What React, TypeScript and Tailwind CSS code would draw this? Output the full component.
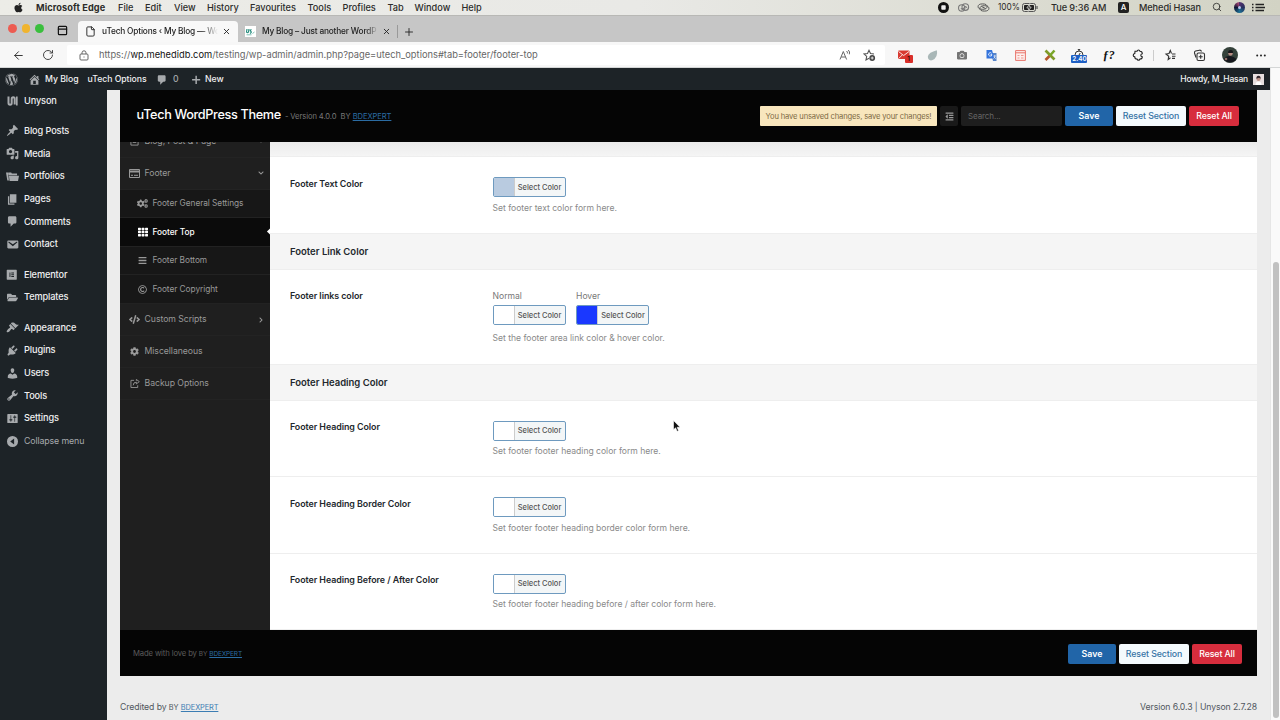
import { ReactNode } from "react";
import {
  FaApple,
  FaCamera,
  FaChevronDown,
  FaChevronRight,
  FaCode,
  FaCog,
  FaCogs,
  FaBars,
  FaElementor,
  FaFolderOpen,
  FaOutdent,
  FaRegCopyright,
  FaTh,
  FaWordpress,
} from "react-icons/fa";
import {
  ArrowLeft,
  File as FileIcon,
  PanelTop,
  Plus,
  RotateCw,
  Search,
  X,
} from "lucide-react";

interface iconProps {
  d: string;
  className?: string;
}

const dash = {
  post: "M10.44 3.02l1.82-1.82 6.36 6.35-1.83 1.82c-1.05-.68-2.48-.57-3.41.36l-.75.75c-.92.93-1.04 2.35-.35 3.41l-1.83 1.82-2.41-2.41-2.8 2.79c-.42.42-3.38 2.71-3.8 2.29s1.86-3.39 2.28-3.81l2.79-2.79L4.1 9.36l1.83-1.82c1.05.69 2.48.57 3.4-.36l.75-.75c.93-.92 1.05-2.35.36-3.41z",
  media:
    "M13 11V4c0-.55-.45-1-1-1h-1.67L9 1H5L3.67 3H2c-.55 0-1 .45-1 1v7c0 .55.45 1 1 1h10c.55 0 1-.45 1-1zM7 4.5c1.38 0 2.5 1.12 2.5 2.5S8.38 9.5 7 9.5 4.5 8.38 4.5 7 5.62 4.5 7 4.5zM14 6h5v10.5c0 1.38-1.12 2.5-2.5 2.5S14 17.88 14 16.5s1.12-2.5 2.5-2.5c.17 0 .34.02.5.05V9h-3V6zm-4 8.05V13h2v3.5c0 1.38-1.12 2.5-2.5 2.5S7 17.88 7 16.5 8.12 14 9.5 14c.17 0 .34.02.5.05z",
  portfolio:
    "M0 4h3.5l1 1.5L3.600 7 4.500 16H2zM4 7V4h4l1 1.500h8V8H4.800zM4.500 9H20l-1.500 8H5.500z",
  page: "M6 15V2h10v13H6zm-1 1h8v2H3V5h2v11z",
  comment:
    "M5 2h9c1.1 0 2 .9 2 2v7c0 1.1-.9 2-2 2h-2l-5 5v-5H5c-1.1 0-2-.9-2-2V4c0-1.1.9-2 2-2z",
  email:
    "M3.87 4h13.25C18.37 4 19 4.59 19 5.79v8.42c0 1.19-.63 1.79-1.88 1.79H3.87c-1.25 0-1.88-.6-1.88-1.79V5.79c0-1.2.63-1.79 1.88-1.79zm6.62 8.6l6.74-5.53c.24-.2.43-.66.13-1.07-.29-.41-.82-.42-1.17-.17l-5.7 3.86L4.8 5.83c-.35-.25-.88-.24-1.17.17-.3.41-.11.87.13 1.07z",
  appearance:
    "M14.48 11.06L7.41 3.99l1.5-1.5c.5-.56 2.3-.47 3.51.32 1.21.8 1.43 1.28 2.91 2.1 1.18.64 2.45 1.26 4.45.85zm-.71.71L6.7 4.7 4.93 6.47c-.39.39-.39 1.02 0 1.41l1.06 1.06c.39.39.39 1.03 0 1.42-.6.6-1.43 1.11-2.21 1.69-.35.26-.7.53-1.01.84C1.43 14.23.4 16.08 1.4 17.07c.99 1 2.84-.03 4.18-1.36.31-.31.58-.66.85-1.02.57-.78 1.08-1.61 1.69-2.21.39-.39 1.02-.39 1.41 0l1.06 1.06c.39.39 1.02.39 1.41 0z",
  plugins:
    "M13.11 4.36L9.87 7.6 8 5.73l3.24-3.24c.35-.34 1.05-.2 1.56.32.52.51.66 1.21.31 1.55zm-8 1.77l.91-1.12 9.01 9.01-1.19.84c-.71.71-2.63 1.16-3.82 1.16H6.14L4.9 17.26c-.59.59-1.54.59-2.12 0-.59-.58-.59-1.53 0-2.12l1.24-1.24v-3.88c0-1.13.4-3.19 1.09-3.89zm7.26 3.97l3.24-3.24c.34-.35 1.04-.21 1.55.31.52.51.66 1.21.31 1.55l-3.24 3.25z",
  users:
    "M10 9.25c-2.27 0-2.73-3.44-2.73-3.44C7 4.02 7.82 2 9.97 2c2.16 0 2.98 2.02 2.71 3.81 0 0-.41 3.44-2.68 3.44zm0 2.57L12.72 10c2.39 0 4.52 2.33 4.52 4.53v2.49s-3.65 1.13-7.24 1.13c-3.65 0-7.24-1.13-7.24-1.13v-2.49c0-2.25 1.94-4.48 4.47-4.48z",
  tools:
    "M16.68 9.77c-1.34 1.34-3.3 1.67-4.95.99l-5.41 6.52c-.99.99-2.59.99-3.58 0s-.99-2.59 0-3.57l6.52-5.42c-.68-1.65-.35-3.61.99-4.95 1.28-1.28 3.12-1.62 4.72-1.06l-2.89 2.89 2.82 2.82 2.86-2.87c.53 1.58.18 3.39-1.08 4.65zM3.81 16.21c.4.39 1.04.39 1.43 0 .4-.4.4-1.04 0-1.43-.39-.4-1.03-.4-1.43 0-.39.39-.39 1.03 0 1.43z",
  settings:
    "M18 16V4c0-.55-.45-1-1-1H3c-.55 0-1 .45-1 1v12c0 .55.45 1 1 1h14c.55 0 1-.45 1-1zM8 11h1c.55 0 1 .45 1 1s-.45 1-1 1H8v1.5c0 .28-.22.5-.5.5s-.5-.22-.5-.5V13H6c-.55 0-1-.45-1-1s.45-1 1-1h1V5.5c0-.28.22-.5.5-.5s.5.22.5.5V11zm5-2h-1c-.55 0-1-.45-1-1s.45-1 1-1h1V5.5c0-.28.22-.5.5-.5s.5.22.5.5V7h1c.55 0 1 .45 1 1s-.45 1-1 1h-1v5.5c0 .28-.22.5-.5.5s-.5-.22-.5-.5V9z",
  home: "M16 8.5l1.53 1.53-1.06 1.06L10 4.6l-6.47 6.49-1.06-1.06L10 2.5l4 4v-2h2v4zm-6-2.46l6 5.99V18H4v-5.97zM12 17v-5H8v5h4z",
  plus: "M17 8.500v2.500h-5.500v5.500H9v-5.500H3.500V8.500H9V3h2.500v5.500z",
  collapse:
    "M10 1.500a8.500 8.500 0 1 0 0 17 8.500 8.500 0 0 0 0-17zM12.500 5.500v9L6.500 10z",
};

const DashIcon = ({ d, className = "size-[13px]" }: iconProps) => (
  <svg viewBox="0 0 20 20" fill="currentColor" fillRule="evenodd" className={className}>
    <path d={d} />
  </svg>
);

const UnysonIcon = () => (
  <svg viewBox="0 0 11 10" className="h-[10px] w-[11px]" fill="none" stroke="currentColor" strokeWidth="2">
    <path d="M1.500 .5v6.500q0 1.800 1.600 1.800T4.700 7V3q0-1.800 1.500-1.800T7.700 3v5.500" />
    <path d="M9.800 .5v9" strokeWidth="1.700" />
  </svg>
);

const menus: [string, string][] = [
  ["File", "w-[27px]"],
  ["Edit", "w-[29px]"],
  ["View", "w-[33px]"],
  ["History", "w-[43px]"],
  ["Favourites", "w-[57.500px]"],
  ["Tools", "w-[35px]"],
  ["Profiles", "w-[45px]"],
  ["Tab", "w-[27px]"],
  ["Window", "w-[47px]"],
  ["Help", "w-[30px]"],
];

const MenuBar = () => (
  <div className="flex h-[15px] items-center bg-gradient-to-r from-[#ecece7] via-[#e9e9e6] to-[#d2d3c4] text-[9.200px] font-medium text-[#2c2c2a]">
    <FaApple className="ml-[13px] size-[11px] text-[#222]" />
    <span className="ml-[12px] w-[82px] font-bold tracking-[0.1px]">Microsoft Edge</span>
    {menus.map(([label, width]) => (
      <span key={label} className={`shrink-0 whitespace-nowrap ${width}`}>
        {label}
      </span>
    ))}
    <div className="ml-auto flex items-center whitespace-nowrap">
      <svg viewBox="0 0 11 11" className="mr-[8px] size-[11px]">
        <circle cx="5.500" cy="5.500" r="5.500" fill="#111" />
        <rect x="3.300" y="3.300" width="4.400" height="4.400" rx=".8" fill="#eee" />
      </svg>
      <svg viewBox="0 0 14 10" className="mr-[7px] h-[9px] w-[13px]" fill="none" stroke="#777" strokeWidth="1.200">
        <circle cx="5" cy="5.500" r="3.500" />
        <circle cx="9" cy="4.500" r="3.700" />
        <path d="M4 6l2 1 3-3 2 1" />
      </svg>
      <svg viewBox="0 0 14 10" className="mr-[8px] h-[9px] w-[13px]" fill="none" stroke="#555" strokeWidth="1.100">
        <ellipse cx="6" cy="4" rx="5" ry="3" />
        <ellipse cx="8" cy="6" rx="5" ry="3" />
        <path d="M5 4l4 2" />
      </svg>
      <span className="w-[24px] text-[8.300px] font-normal">100%</span>
      <svg viewBox="0 0 16 9" className="mr-[13px] h-[9px] w-[16px]">
        <rect x=".5" y=".5" width="13" height="8" rx="2" fill="none" stroke="#555" />
        <rect x="2" y="2" width="10" height="5" rx=".8" fill="#222" />
        <path d="M15 3v3" stroke="#555" strokeWidth="1.200" />
        <path d="M7.800 .5L4.800 5h2l-.6 3.500L9.200 4h-2z" fill="#222" stroke="#e6e6e2" strokeWidth=".7" />
      </svg>
      <span className="w-[67px] tracking-[-0.08px]">Tue 9:36 AM</span>
      <span className="mr-[10px] flex size-[11px] items-center justify-center rounded-[2px] bg-[#222] text-[8px] text-white">
        A
      </span>
      <span className="w-[73px] tracking-[-0.08px]">Mehedi Hasan</span>
      <Search className="mr-[12px] size-[10px]" />
      <span className="mr-[7px] flex size-[11px] items-center justify-center rounded-full bg-[conic-gradient(#53306e,#27325e,#1b6e93,#111634,#b64c7c)]">
        <span className="size-[3px] rounded-full bg-[#b9c5ec]" />
      </span>
      <svg viewBox="0 0 13 9" className="mr-[15px] h-[9px] w-[13px]" stroke="#222" strokeWidth="1.500">
        <path d="M3.500 1.500H12M3.500 4.500H13M3.500 7.500H12M0 1.500h1.500M0 4.500h1.500M0 7.500h1.500" />
      </svg>
    </div>
  </div>
);

const TabStrip = () => (
  <div className="flex h-[27px] items-end border-t border-[#b8b8b5] bg-[#c6c6c6] text-[8.300px] font-medium tracking-[-0.18px] text-[#222]">
    <div className="flex h-[27px] w-[78px] items-center gap-[5px] pl-[8px]">
      <span className="size-[8.500px] rounded-full bg-[#ed5c52]" />
      <span className="size-[8.500px] rounded-full bg-[#f0b42f]" />
      <span className="size-[8.500px] rounded-full bg-[#3abf3d]" />
      <PanelTop className="mt-[4px] ml-[8px] size-[11px] text-[#111]" strokeWidth={2.6} />
    </div>
    <div className="flex h-[21px] w-[160px] items-center rounded-t-[4px] bg-[#f8f8f8] pl-[7px]">
      <FileIcon className="mr-[6px] size-[11px] shrink-0" />
      <span className="w-[116px] whitespace-nowrap [mask-image:linear-gradient(90deg,#000_86%,transparent)]">
        uTech Options ‹ My Blog — Wo
      </span>
      <X className="ml-[4px] size-[9px]" strokeWidth={2.4} />
    </div>
    <div className="flex h-[21px] items-center pl-[7px]">
      <svg viewBox="0 0 11 11" className="mr-[6px] size-[11px]" fill="none" strokeWidth="1.200">
        <path d="M0 0h11v11H0z" fill="#fff" />
        <path d="M2 3L1.500 6q1 1.500 2 0L4 3M6.500 3.500q-2 .5-.7 1.700T5 7.500" stroke="#248c7d" />
        <path d="M7.500 7.500L9.500 6M1.500 8.800h5" stroke="#61b3a5" strokeWidth=".8" />
      </svg>
      <span className="w-[116px] whitespace-nowrap [mask-image:linear-gradient(90deg,#000_90%,transparent)]">
        My Blog – Just another WordP
      </span>
      <X className="ml-[4px] size-[9px]" strokeWidth={2.4} />
      <span className="ml-[6px] h-[13px] w-px bg-[#999]" />
      <Plus className="ml-[5px] size-[12px]" strokeWidth={1.8} />
    </div>
  </div>
);

const Extension = ({ children }: { children: ReactNode }) => (
  <span className="flex w-[29.300px] shrink-0 items-center justify-center">{children}</span>
);

const Toolbar = () => (
  <div className="flex h-[26px] items-center border-b border-[#d4d6d6] bg-[#f7f7f7] pt-px text-[#333]">
    <ArrowLeft className="ml-[12px] size-[13px]" strokeWidth={1.8} />
    <RotateCw className="ml-[17px] size-[12px]" strokeWidth={1.8} />
    <div className="ml-[13px] flex h-[20px] w-[818px] items-center rounded-[2px] bg-white pl-[12px]">
      <svg viewBox="0 0 10 11" className="mr-[10px] h-[11px] w-[10px]" fill="none" stroke="#666">
        <rect x="1" y="4" width="8" height="6" rx="1" />
        <path d="M3 4V2.800a2 2 0 0 1 4 0V4M4.500 7h1" />
      </svg>
      <span className="text-[9.300px] tracking-[0.015px] text-[#666]">
        https://<span className="text-[#111]">wp.mehedidb.com</span>
        /testing/wp-admin/admin.php?page=utech_options#tab=footer/footer-top
      </span>
      <svg viewBox="0 0 12 12" className="mr-[12px] ml-auto size-[12px]" fill="none" stroke="#666" strokeWidth="1">
        <path d="M1 10.500L4.300 2.500 7.600 10.500M2.200 8h4.200M7.500 2q1.500 1 .8 2.500M9.300 1q2 1.800 1 4.300" />
      </svg>
      <svg viewBox="0 0 13 13" className="mr-[9px] size-[13px]" fill="none" stroke="#555" strokeWidth="1.100">
        <path d="M6 9.200L3 11l.7-3.600L1 5l3.500-.5L6 1.300l1.500 3.200L11 5" />
        <circle cx="9.200" cy="9" r="2.900" fill="#444" stroke="none" />
        <path d="M9.200 7.500v3M7.700 9h3" stroke="#fff" strokeWidth=".8" />
      </svg>
    </div>
    <div className="flex items-center pl-[4px]">
      <Extension>
        <span className="relative">
          <svg viewBox="0 0 12 10" className="h-[10px] w-[12px]">
            <rect y=".5" width="11.500" height="8.500" rx="1" fill="#d83931" />
            <path d="M.5 1.500l5.200 4 5.300-4M.7 8.500l3.500-3.500" fill="none" stroke="#fbe3e1" />
          </svg>
          <span className="absolute top-[5px] left-[7px] flex h-[8px] w-[8px] items-center justify-center rounded-[1px] bg-[#d92f2a] text-[6.500px] leading-none text-black">
            1
          </span>
        </span>
      </Extension>
      <Extension>
        <svg viewBox="0 0 11 11" className="size-[11px]">
          <path d="M9.800 .3Q11 6 7.500 9 3.500 11.800 1.400 9-.4 5.500 3.500 2.800 6 1.600 9.800 .3z" fill="#a9b7b7" />
        </svg>
      </Extension>
      <Extension>
        <FaCamera className="size-[10px] text-[#757575]" />
      </Extension>
      <Extension>
        <svg viewBox="0 0 11 11" className="size-[11px]">
          <path d="M5 3h5.500v8H7z" fill="#5885c9" />
          <path d="M.5 0H6l2.500 8.500H.5z" fill="#3474dc" />
          <path d="M5.600 3.300A1.700 1.700 0 1 0 6 4.600H4.500" fill="none" stroke="#fff" strokeWidth=".8" />
          <path d="M7.500 6h2.500M8.700 5.300v1Q8.500 8 7.500 8.500M8 6.800l1.700 2" fill="none" stroke="#fff" strokeWidth=".6" />
        </svg>
      </Extension>
      <Extension>
        <svg viewBox="0 0 11 11" className="size-[11px]" fill="none" stroke="#e8766c">
          <path d="M.6 .6h9.800v9.800H.6zM.6 2.800h9.800" fill="#fdeeec" />
          <path d="M2.500 5.500h2M6 5.500h2.500M2.500 8h2M6 8h2.500" strokeWidth=".7" />
        </svg>
      </Extension>
      <Extension>
        <svg viewBox="0 0 12 12" className="size-[12px]" strokeWidth="2.600">
          <path d="M1.500 1.500l9 9" stroke="#7f9b29" />
          <path d="M10.500 1.500l-5 5.500" stroke="#79a629" />
          <path d="M5.500 7l-4 4" stroke="#b5582b" />
        </svg>
      </Extension>
      <Extension>
        <span className="mt-[2px] flex h-[14px] w-[16px] flex-col items-center">
          <svg viewBox="0 0 10 6" className="h-[6px] w-[10px] shrink-0" fill="none" stroke="#333">
            <path d="M1 6A4 4 0 0 1 9 6M3.800 .6h2.400M5 .6v1.500M5 6l1.200-2" />
          </svg>
          <span className="flex h-[8px] w-[16px] shrink-0 items-center justify-center rounded-[1px] bg-[#1e5fc4] text-[6.300px] leading-none font-semibold text-white">
            2.40
          </span>
        </span>
      </Extension>
      <Extension>
        <span className="font-[Liberation_Serif] text-[12px] leading-none font-bold text-[#111] italic">ƒ?</span>
      </Extension>
      <Extension>
        <svg viewBox="0 0 12 12" className="size-[12px]" fill="none" stroke="#222" strokeWidth="1.100">
          <path d="M3 2.300h2q.3-1.300 1.500-1.300T8 2.300q2.300 0 2.300 2.400-1.500.2-1.500 1.500t1.500 1.500Q10.300 10 8 10q-.3 1.200-1.500 1.200T5 10Q2.800 10 2.800 7.900 1.200 7.600 1.200 6.200T2.800 4.500z" />
        </svg>
      </Extension>
      <span className="h-[11px] w-px bg-[#ccc]" />
      <Extension>
        <svg viewBox="0 0 12 12" className="ml-[4px] size-[12px]" fill="none" stroke="#333" strokeWidth="1.100">
          <path d="M6.500 8.800L4.200 10.500l.5-3.300L2 5l3-.5L6.300 1.500 7.500 4.500M8 5h3.500M8 7.200h3.500M8 9.400h3" />
        </svg>
      </Extension>
      <Extension>
        <svg viewBox="0 0 13 13" className="ml-[4px] size-[13px]" fill="none" stroke="#333" strokeWidth="1.100">
          <rect x="4" y="4" width="7.500" height="7.500" rx="1.500" />
          <path d="M7.700 5.800v4M5.700 7.800h4M3 8.500L1.500 4q-.3-1.500 1-2L6.500 1.200Q8 1 8.500 2.500" />
        </svg>
      </Extension>
      <Extension>
        <svg viewBox="0 0 16 16" className="ml-[6px] size-[16px]">
          <circle cx="8" cy="8" r="8" fill="#34413a" />
          <path d="M1.500 12Q4 8.500 8 9t6.500 3A8 8 0 0 1 1.500 12z" fill="#15171d" />
          <circle cx="8.500" cy="6.500" r="2.200" fill="#b88d84" />
          <path d="M6 6q0-3 2.700-3T11 6z" fill="#17161a" />
          <circle cx="4" cy="12" r="1.300" fill="#927069" />
        </svg>
      </Extension>
      <svg viewBox="0 0 10 3" className="ml-[14px] h-[3px] w-[10px]" fill="#222">
        <circle cx="1.200" cy="1.500" r="1" />
        <circle cx="5" cy="1.500" r="1" />
        <circle cx="8.800" cy="1.500" r="1" />
      </svg>
    </div>
  </div>
);

const AdminBar = () => (
  <div className="flex h-[22px] items-center bg-[#1d2327] pt-px text-[8.700px] font-medium tracking-[-0.05px] text-[#f0f0f1]">
    <FaWordpress className="-mt-px ml-[5px] size-[13px] text-[#a7aaad]" />
    <DashIcon d={dash.home} className="-mt-px ml-[10px] size-[13px] text-[#a7aaad]" />
    <span className="ml-[4px] w-[42.500px] whitespace-nowrap">My Blog</span>
    <span className="w-[68.500px] whitespace-nowrap">uTech Options</span>
    <DashIcon d={dash.comment} className="size-[12px] text-[#a7aaad]" />
    <span className="ml-[5px] w-[17px] text-[#a7aaad]">0</span>
    <DashIcon d={dash.plus} className="size-[12px] text-[#a7aaad]" />
    <span className="ml-[3px]">New</span>
    <span className="ml-auto text-[8.500px] tracking-[-0.2px]">Howdy, M_Hasan</span>
    <svg viewBox="0 0 11 11" className="mr-[6px] ml-[5px] size-[11px]">
      <path d="M0 0h11v11H0z" fill="#e7dfdf" />
      <path d="M2.500 11q0-3.500 3-3.500t3 3.500z" fill="#fff" />
      <circle cx="5.500" cy="5" r="2.100" fill="#bd9388" />
      <path d="M3.300 4.700q0-3 2.200-3t2.200 3L6 3.700z" fill="#30242a" />
    </svg>
  </div>
);

interface menuItem {
  label: string;
  icon: ReactNode;
  gap?: boolean;
  dim?: boolean;
}

const adminMenu: menuItem[] = [
  { label: "Unyson", icon: <UnysonIcon /> },
  { label: "Blog Posts", icon: <DashIcon d={dash.post} />, gap: true },
  { label: "Media", icon: <DashIcon d={dash.media} /> },
  { label: "Portfolios", icon: <DashIcon d={dash.portfolio} /> },
  { label: "Pages", icon: <DashIcon d={dash.page} /> },
  { label: "Comments", icon: <DashIcon d={dash.comment} /> },
  { label: "Contact", icon: <DashIcon d={dash.email} /> },
  { label: "Elementor", icon: <FaElementor className="size-[11.500px]" />, gap: true },
  { label: "Templates", icon: <FaFolderOpen className="size-[11px]" /> },
  { label: "Appearance", icon: <DashIcon d={dash.appearance} />, gap: true },
  { label: "Plugins", icon: <DashIcon d={dash.plugins} /> },
  { label: "Users", icon: <DashIcon d={dash.users} /> },
  { label: "Tools", icon: <DashIcon d={dash.tools} /> },
  { label: "Settings", icon: <DashIcon d={dash.settings} /> },
  { label: "Collapse menu", icon: <DashIcon d={dash.collapse} />, dim: true },
];

const AdminMenu = () => (
  <div className="-mt-[0.700px] w-[107px] shrink-0 bg-[#1d2327] text-[9.200px] font-medium tracking-[-0.12px] text-[#f0f0f1]">
    {adminMenu.map(({ label, icon, gap, dim }) => (
      <div key={label} className={`flex h-[22.700px] items-center ${gap ? "mt-[7.600px]" : ""}`}>
        <span className="mr-[5px] ml-[5px] flex w-[14px] justify-center text-[#a7aaad]">{icon}</span>
        <span className={dim ? "text-[8.800px] font-normal text-[#a7aaad]" : ""}>{label}</span>
      </div>
    ))}
  </div>
);

const Actions = () => (
  <div className="flex gap-[3px] text-[8.800px] font-medium">
    <span className="flex h-5 w-12 items-center justify-center rounded-[2px] bg-[#2165a8] font-semibold text-white">
      Save
    </span>
    <span className="flex h-5 w-[70px] items-center justify-center rounded-[2px] bg-[#f4fafd] tracking-[-0.1px] whitespace-nowrap text-[#3573a5]">
      Reset Section
    </span>
    <span className="flex h-5 w-[50px] items-center justify-center rounded-[2px] bg-[#d72d3d] tracking-[-0.12px] whitespace-nowrap text-white">
      Reset All
    </span>
  </div>
);

const ThemeHeader = () => (
  <div className="flex h-[52px] shrink-0 items-center bg-[#050505] pr-[18px] pl-[16.500px]">
    <span className="-mt-[2px] text-[12.700px] font-medium tracking-[-0.350px] text-white">uTech WordPress Theme</span>
    <span className="mt-[2px] ml-[4px] text-[7.600px] tracking-[-0.08px] text-[#777]">
      - Version 4.0.0 &nbsp;BY{" "}
      <span className="text-[#2b6ca3] underline">BDEXPERT</span>
    </span>
    <div className="ml-auto flex items-center gap-[3px]">
      <span className="flex h-5 w-[177px] items-center justify-center rounded-[1px] bg-[#f8e6bd] pt-px text-[7.600px] tracking-[-0.150px] whitespace-nowrap text-[#7d6a45]">
        You have unsaved changes, save your changes!
      </span>
      <span className="flex h-5 w-[18px] items-center justify-center rounded-[2px] bg-[#191919] text-[#999]">
        <FaOutdent className="size-[9px]" />
      </span>
      <span className="flex h-5 w-[101px] items-center rounded-[2px] bg-[#1e1e1e] pl-[7px] text-[8px] tracking-[-0.1px] text-[#666]">
        Search...
      </span>
      <Actions />
    </div>
  </div>
);

interface navItem {
  label: string;
  icon: ReactNode;
  arrow?: ReactNode;
}

const NavRow = ({ label, icon, arrow }: navItem) => (
  <div className="flex h-[31.800px] items-center border-b border-[#232323] pr-[6px] pl-[9px]">
    <span className="mr-[4.500px] flex w-[11px] justify-center">{icon}</span>
    <span className="flex-1">{label}</span>
    {arrow}
  </div>
);

const subItems: navItem[] = [
  { label: "Footer General Settings", icon: <FaCogs className="size-[11px]" /> },
  { label: "Footer Top", icon: <FaTh className="size-[10px]" /> },
  { label: "Footer Bottom", icon: <FaBars className="size-[9px]" /> },
  { label: "Footer Copyright", icon: <FaRegCopyright className="size-[9px]" /> },
];

const ThemeNav = () => (
  <div className="w-[150px] shrink-0 overflow-hidden bg-[#1f1f1f] text-[8.700px] tracking-[-0.050px] text-[#999]">
    <div className="-mt-[16px]">
      <NavRow
        label="Blog, Post & Page"
        icon={
          <svg viewBox="0 0 10 10" className="size-[9px]" fill="none" stroke="currentColor">
            <path d="M1 1h8v8H1zM3 6h4" />
          </svg>
        }
        arrow={<FaChevronDown className="size-[6px]" />}
      />
      <NavRow
        label="Footer"
        icon={
          <svg viewBox="0 0 11 9" className="h-[9px] w-[11px]" fill="none" stroke="currentColor">
            <path d="M.5 .5h10v8H.5z" />
            <path d="M.5 2.500h10" strokeWidth="2" />
            <path d="M2 6.300h2M5 6.300h4" />
          </svg>
        }
        arrow={<FaChevronDown className="size-[6px]" />}
      />
      <div className="bg-[#171717] text-[8.300px]">
        {subItems.map(({ label, icon }) => {
          const active = label === "Footer Top";
          return (
            <div
              key={label}
              className={`relative flex h-[28.600px] items-center border-b border-[#222] pl-[17px] ${
                active ? "bg-[#0b0b0b] font-medium text-white" : ""
              }`}
            >
              <span className="mr-[4.500px] flex w-[11px] justify-center">{icon}</span>
              {label}
              {active && <span className="absolute right-[-2.500px] size-[5px] rotate-45 bg-white" />}
            </div>
          );
        })}
      </div>
      <div className="pt-[0.500px]">
        <NavRow
          label="Custom Scripts"
          icon={<FaCode className="size-[11px]" />}
          arrow={<FaChevronRight className="size-[6px]" />}
        />
      </div>
      <NavRow label="Miscellaneous" icon={<FaCog className="size-[9px]" />} />
      <NavRow
        label="Backup Options"
        icon={
          <svg viewBox="0 0 11 10" className="h-[9px] w-[10px]" fill="none" stroke="currentColor">
            <path d="M4.500 1.500H1v8h7.500V7M3.500 7Q3.500 3.500 7 3.500V5.500L10.300 2.900 7 .5v1.500" />
          </svg>
        }
      />
    </div>
  </div>
);

const ColorButton = ({ swatch = "bg-white" }: { swatch?: string }) => (
  <span className="flex h-5 w-[73px] overflow-hidden rounded-[2px] border border-[#6e9abf] bg-[#f3f6f7]">
    <span className={`w-[21px] border-r border-[#ccc] ${swatch}`} />
    <span className="flex flex-1 items-center justify-center pt-[1px] text-[7.500px] font-medium tracking-[-0.02px] whitespace-nowrap text-[#555]">
      Select Color
    </span>
  </span>
);

interface fieldProps {
  label: string;
  desc: string;
  height: string;
  children: ReactNode;
}

const Field = ({ label, desc, height, children }: fieldProps) => (
  <div className={`flex shrink-0 border-b border-[#eee] pt-5 pl-5 ${height}`}>
    <span className="-mt-[0.500px] w-[202.500px] text-[8.900px] leading-[13px] font-semibold tracking-[-0.06px] text-[#23282d]">
      {label}
    </span>
    <div>
      {children}
      <p className="mt-[4.500px] text-[8.600px] leading-[13px] tracking-[-0.02px] text-[#8a8a8a]">{desc}</p>
    </div>
  </div>
);

const Section = ({ title }: { title: string }) => (
  <div className="flex h-9 shrink-0 items-center border-b border-[#eee] bg-[#f5f5f5] pt-[1.500px] pl-5 text-[9.500px] font-semibold text-[#23282d]">
    {title}
  </div>
);

const Content = () => (
  <div className="flex flex-1 flex-col bg-white">
    <div className="h-[15px] shrink-0 border-b border-[#eee] bg-gradient-to-b from-[#ebebeb] to-[#f5f5f5]" />
    <Field label="Footer Text Color" desc="Set footer text color form here." height="h-[76.500px]">
      <ColorButton swatch="bg-[#b9cbe0]" />
    </Field>
    <Section title="Footer Link Color" />
    <Field label="Footer links color" desc="Set the footer area link color & hover color." height="h-[95px]">
      <div className="mb-[7px] flex gap-[10.500px] text-[8.600px] leading-[13px] text-[#777]">
        <div>
          <p className="mb-[2px]">Normal</p>
          <ColorButton />
        </div>
        <div>
          <p className="mb-[2px]">Hover</p>
          <ColorButton swatch="bg-[#1a38ff]" />
        </div>
      </div>
    </Field>
    <Section title="Footer Heading Color" />
    <Field label="Footer Heading Color" desc="Set footer footer heading color form here." height="h-[76.500px]">
      <ColorButton />
    </Field>
    <Field
      label="Footer Heading Border Color"
      desc="Set footer footer heading border color form here."
      height="h-[76.500px]"
    >
      <ColorButton />
    </Field>
    <Field
      label="Footer Heading Before / After Color"
      desc="Set footer footer heading before / after color form here."
      height="h-[76.500px]"
    >
      <ColorButton />
    </Field>
  </div>
);

const App = () => (
  <div className="relative flex h-[720px] w-[1280px] flex-col overflow-hidden bg-[#fafafa] font-[Inter,sans-serif]">
    <MenuBar />
    <TabStrip />
    <Toolbar />
    <div className="flex min-h-0 flex-1">
      <div className="flex w-[1270px] flex-col bg-[#ececec]">
        <AdminBar />
        <div className="flex min-h-0 flex-1">
          <AdminMenu />
          <div className="ml-[13px] flex w-[1137px] flex-col">
            <ThemeHeader />
            <div className="flex h-[488px] shrink-0">
              <ThemeNav />
              <Content />
            </div>
            <div className="flex h-[46px] shrink-0 items-center justify-between bg-[#050505] pt-px pr-[15px] pl-[13px]">
              <span className="text-[7.700px] tracking-[-0.130px] text-[#5c5c5c]">
                Made with love by <span className="text-[6.500px]">BY</span>{" "}
                <span className="text-[6.500px] text-[#2b6ca3] underline">BDEXPERT</span>
              </span>
              <Actions />
            </div>
            <div className="flex h-[44px] items-center justify-between pt-[20px] text-[8.700px] tracking-[-0.1px] text-[#50575e]">
              <span>
                Credited by <span className="text-[7.400px]">BY</span>{" "}
                <span className="text-[7.400px] text-[#3c7db3] underline">BDEXPERT</span>
              </span>
              <span>Version 6.0.3 | Unyson 2.7.28</span>
            </div>
          </div>
        </div>
      </div>
      <div className="flex flex-1 justify-center border-l border-[#e6e6e6] pt-[194px]">
        <span className="h-[456px] w-[6px] rounded-full bg-[#c1c1c1]" />
      </div>
    </div>
    {/* pointer */}
    <svg viewBox="0 0 8 12" className="absolute top-[420px] left-[673px] h-[12px] w-[8px]">
      <path d="M.5 .5v9.300l2.100-2 1.500 3.500 1.500-.6-1.500-3.400h3z" fill="#111" stroke="#fff" strokeWidth=".6" />
    </svg>
  </div>
);

export default App;
